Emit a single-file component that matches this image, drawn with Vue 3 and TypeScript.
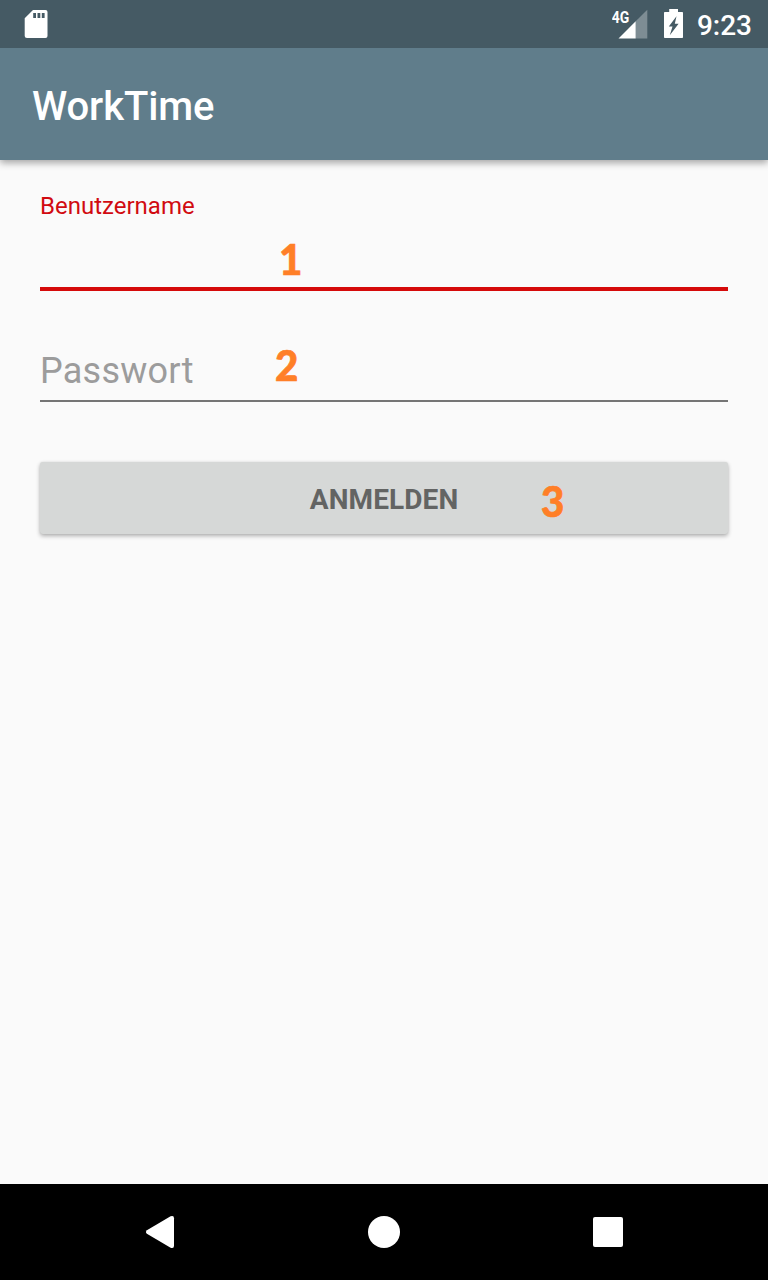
<script setup lang="ts">
import { ref } from 'vue'

const username = ref('')
const password = ref('')
</script>

<template>
  <div class="screen">
    <header class="status">
      <svg class="sd" width="24" height="30" viewBox="0 0 24 30">
        <path fill="#fff" fill-rule="evenodd" d="M9 1H21.5Q23.5 1 23.5 3V27Q23.5 29 21.5 29H3Q.7 29 .7 27V9.2ZM9.2 4V9H12V4ZM13.5 4V9H16.3V4ZM17.8 4V9H20.6V4Z" />
      </svg>
      <div class="right">
        <svg width="36" height="30" viewBox="0 0 36 30">
          <path fill="#7e8d94" d="M23.7 12.3L35.3 .7V29.5H23.7Z" />
          <path fill="#fff" d="M6.5 29.5L23.7 12.3V29.5Z" />
          <text class="network" x="-.3" y="13.6" textLength="17.5" lengthAdjust="spacingAndGlyphs">4G</text>
        </svg>
        <svg class="battery" width="20" height="30" viewBox="0 0 20 30">
          <path fill="#fff" fill-rule="evenodd" d="M5.2 0H14V3H18.2Q19 3 19 3.8V28.2Q19 29 18.2 29H.8Q0 29 0 28.2V3.8Q0 3 .8 3H5.2ZM12.5 7.2L4.8 17.5H8.5L5.8 26.2L14.6 14.7H10.8Z" />
        </svg>
        <span class="time">9:23</span>
      </div>
    </header>
    <div class="appbar"><h1>WorkTime</h1></div>
    <main>
      <label class="field active">
        <span class="label">Benutzername</span>
        <input v-model="username" type="text">
        <b class="mark one">1</b>
      </label>
      <label class="field pass">
        <input v-model="password" type="password" placeholder="Passwort">
        <b class="mark two">2</b>
      </label>
      <button type="button"><span>ANMELDEN</span><b class="mark three">3</b></button>
    </main>
    <nav>
      <svg width="64" height="64" viewBox="0 0 64 64">
        <path fill="#fff" d="M18.9 30.2L42.6 16.3Q46 15 46 18.2V45.8Q46 49 42.6 47.7L18.9 33.8Q17 32 18.9 30.2Z" />
      </svg>
      <svg width="64" height="64" viewBox="0 0 64 64"><circle cx="32" cy="32" r="16" fill="#fff" /></svg>
      <svg width="64" height="64" viewBox="0 0 64 64"><rect x="17" y="17" width="30" height="30" rx="2" fill="#fff" /></svg>
    </nav>
  </div>
</template>

<style>
body { margin: 0; }
</style>

<style scoped>
* { box-sizing: border-box; }
.screen {
  width: 768px;
  height: 1280px;
  display: flex;
  flex-direction: column;
  background: #fafafa;
  font-family: Roboto, sans-serif;
  overflow: hidden;
}
svg { display: block; flex: none; }
.status {
  height: 48px;
  flex: none;
  display: flex;
  justify-content: space-between;
  background: #455a64;
  padding: 9px 16px 0 24px;
  position: relative;
  z-index: 1;
}
.right { display: flex; }
.network { font: 700 16.5px Roboto, sans-serif; fill: #fff; }
.battery { margin-left: 16px; }
.time {
  margin-left: 13px;
  font-size: 28px;
  font-weight: 500;
  line-height: 33px;
  color: #fff;
}
.appbar {
  height: 112px;
  flex: none;
  background: #607d8b;
  padding: 35px 32px 0;
  box-shadow: 0 3px 7px rgba(0, 0, 0, .34);
}
h1 {
  margin: 0;
  color: #fff;
  font-size: 40px;
  font-weight: 500;
  line-height: 47px;
  letter-spacing: -.1px;
}
main {
  flex: 1;
  display: flex;
  flex-direction: column;
  padding: 32px 40px 0;
}
.field {
  position: relative;
  display: block;
  height: 99px;
  border-bottom: 4px solid #d50a0a;
}
.label { display: block; color: #d10a10; font-size: 24px; line-height: 28px; }
input {
  display: block;
  width: 100%;
  height: 42px;
  border: 0;
  padding: 0;
  margin: 0;
  outline: 0;
  background: none;
  font: 36px/42px Roboto, sans-serif;
}
.active input { margin-top: 20px; }
input::placeholder { color: #9c9c9c; opacity: 1; letter-spacing: .25px; }
.pass {
  height: 111px;
  padding-top: 59px;
  border-bottom: 2px solid #757575;
}
button {
  position: relative;
  height: 72px;
  margin-top: 60px;
  padding: 3px 0 0;
  border: 0;
  border-radius: 3px;
  background: #d6d8d7;
  box-shadow: 0 2px 4px rgba(0, 0, 0, .3), 0 0 2px rgba(0, 0, 0, .08);
  color: #636463;
  font: 700 28px/33px Roboto, sans-serif;
  letter-spacing: .1px;
}
.mark {
  position: absolute;
  color: #ff7f27;
  font: 900 42px/50px Lato, sans-serif;
  letter-spacing: 0;
  -webkit-text-stroke: .7px #ff7f27;
  transform: scaleX(.96);
  transform-origin: left;
}
.one { left: 239px; top: 42px; }
.two { left: 235px; top: 49px; }
.three { left: 501px; top: 14px; }
nav {
  height: 96px;
  flex: none;
  display: flex;
  align-items: center;
  justify-content: center;
  gap: 160px;
  background: #000;
}
</style>
